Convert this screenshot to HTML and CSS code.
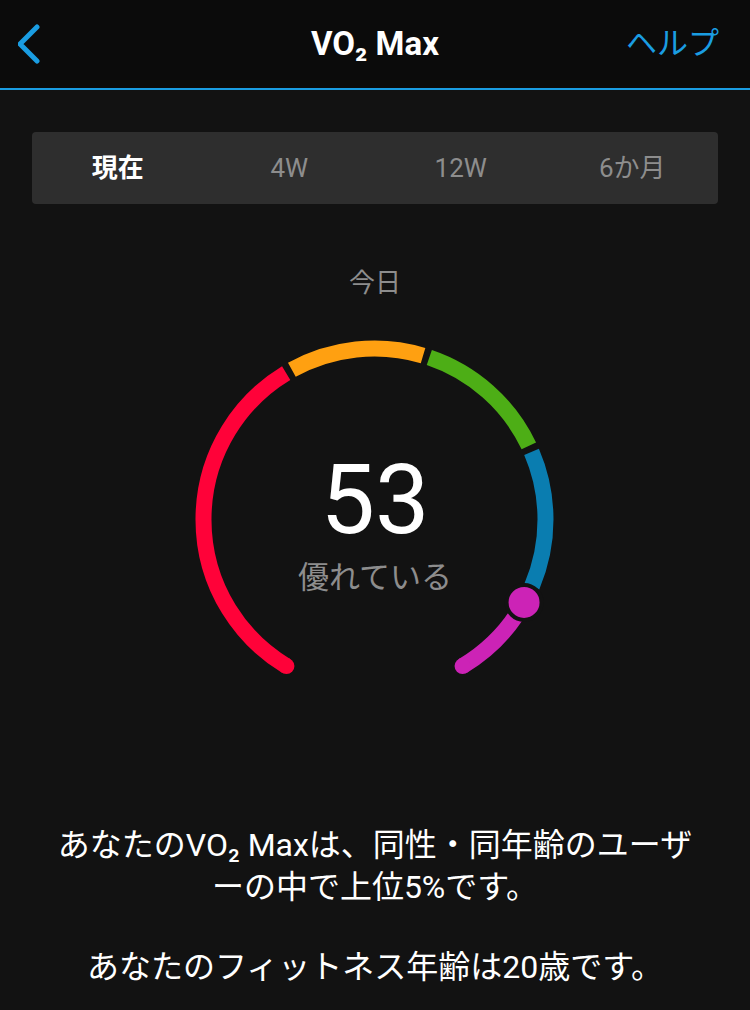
FILE: index.html
```html
<!DOCTYPE html>
<html lang="ja">
<head>
<meta charset="utf-8">
<title>VO₂ Max</title>
<link rel="stylesheet" href="styles.css">
</head>
<body>
<header class="topbar">
  <div class="back">
    <svg class="back-icon" width="24" height="40" viewBox="0 0 24 40">
      <path d="M19 3 L2 20 L19 37" fill="none" stroke="#1a9de2" stroke-width="5" stroke-linecap="round" stroke-linejoin="round"/>
    </svg>
  </div>
  <h1 class="title">VO₂ Max</h1>
  <div class="help">ヘルプ</div>
</header>

<main class="content">
  <nav class="tabs">
    <div class="tab active">現在</div>
    <div class="tab">4W</div>
    <div class="tab">12W</div>
    <div class="tab">6か月</div>
  </nav>

  <div class="day">今日</div>

  <div class="gauge">
    <svg class="gauge-svg" width="380" height="350" viewBox="0 0 380 350">
      <g fill="none" stroke-width="16" stroke-linecap="butt">
        <path d="M101.43 336.08 A171 171 0 0 1 101.18 43.07" stroke="#ff0239"/>
        <path d="M106.86 39.79 A171 171 0 0 1 238.06 25.55" stroke="#ffa011"/>
        <path d="M244.32 27.53 A171 171 0 0 1 343.84 115.88" stroke="#4dae16"/>
        <path d="M346.55 121.87 A171 171 0 0 1 346.91 256.31" stroke="#0a7db0"/>
        <path d="M343.19 264.46 A171 171 0 0 1 277.57 336.08" stroke="#cc23b6"/>
      </g>
      <circle cx="101.43" cy="336.08" r="8" fill="#ff0239"/>
      <circle cx="277.57" cy="336.08" r="8" fill="#cc23b6"/>
      <circle cx="339.06" cy="272.4" r="17.5" fill="#cc23b6" stroke="#121212" stroke-width="4"/>
    </svg>
    <div class="gauge-text">
      <div class="value">53</div>
      <div class="level">優れている</div>
    </div>
  </div>

  <section class="desc">
    <p class="line">あなたのVO₂ Maxは、同性・同年齢のユーザーの中で上位5%です。</p>
    <p class="line">あなたのフィットネス年齢は20歳です。</p>
  </section>
</main>
</body>
</html>
```

FILE: styles.css
```css
* {
  box-sizing: border-box;
}

html, body {
  margin: 0;
  padding: 0;
  background: #121212;
}

body {
  width: 750px;
  height: 1010px;
  overflow: hidden;
  font-family: Roboto, "Noto Sans CJK JP", sans-serif;
  color: #ffffff;
}

.topbar {
  height: 90px;
  background: #0b0b0b;
  border-bottom: 2px solid #1a9de2;
  display: grid;
  grid-template-columns: 1fr auto 1fr;
  align-items: center;
  padding: 0 18px;
}

.back {
  display: flex;
  align-items: center;
}

.back-icon {
  display: block;
}

.title {
  margin: 0;
  font-size: 33px;
  font-weight: 700;
  color: #ffffff;
  line-height: 40px;
}

.help {
  justify-self: end;
  margin-right: 13px;
  font-size: 31px;
  color: #1a9de2;
  line-height: 40px;
}

.content {
  display: flex;
  flex-direction: column;
  align-items: center;
}

.tabs {
  margin-top: 42px;
  width: 686px;
  height: 72px;
  background: #2e2e2e;
  border-radius: 4px;
  display: grid;
  grid-template-columns: repeat(4, 1fr);
  align-items: center;
  justify-items: center;
}

.tab {
  font-size: 26px;
  color: #8d8d8d;
  line-height: 32px;
}

.tab.active {
  color: #ffffff;
  font-weight: 700;
}

.day {
  margin-top: 64px;
  font-size: 26px;
  line-height: 30px;
  color: #8d8d8d;
}

.gauge {
  margin-top: 32px;
  width: 380px;
  height: 350px;
  display: grid;
}

.gauge > * {
  grid-area: 1 / 1;
}

.gauge-svg {
  display: block;
}

.gauge-text {
  padding-top: 122px;
  display: flex;
  flex-direction: column;
  align-items: center;
}

.value {
  font-size: 97px;
  line-height: 97px;
  font-weight: 400;
  color: #ffffff;
}

.level {
  margin-top: 11px;
  font-size: 31px;
  line-height: 36px;
  color: #8d8d8d;
}

.desc {
  margin-top: 144px;
  width: 656px;
  text-align: center;
}

.line {
  margin: 0 0 38px;
  font-size: 32px;
  line-height: 42px;
  color: #ffffff;
  line-break: loose;
}
```
